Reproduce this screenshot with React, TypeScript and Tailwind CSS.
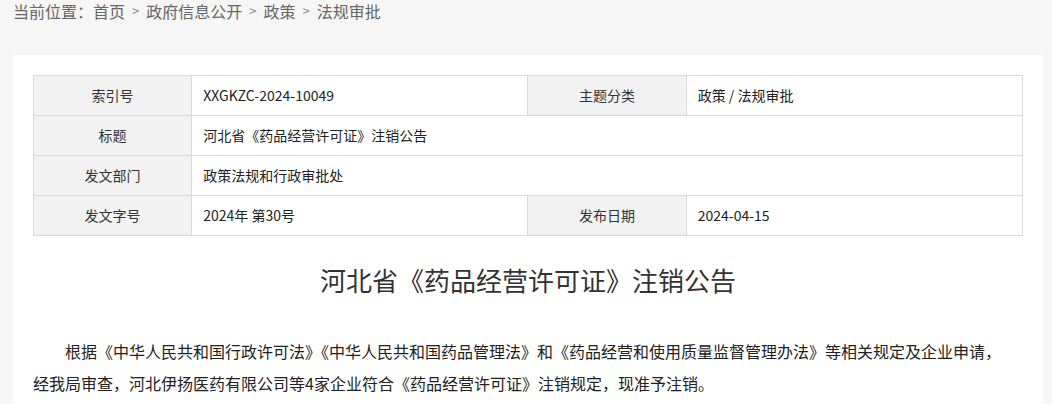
import React from 'react'

const font = { fontFamily: '"Microsoft YaHei", "Noto Sans CJK SC", sans-serif' }

const crumbs = ['首页', '政府信息公开', '政策', '法规审批']

function Label({ children }: { children: React.ReactNode }) {
  return <td className="h-10 border border-[#d9d9d9] bg-[#f2f2f2] text-center text-[14px] text-[#333]">{children}</td>
}

function Value({ children, colSpan }: { children?: React.ReactNode; colSpan?: number }) {
  return (
    <td colSpan={colSpan} className="h-10 border border-[#d9d9d9] bg-white px-[11px] text-left text-[14px] text-[#222]">
      {children}
    </td>
  )
}

export default function App() {
  return (
    <div className="min-h-screen bg-[#f6f6f6]" style={font}>
      <div className="flex items-center px-[13px] text-[16px] leading-[22px] text-[#666]">
        <span>当前位置：</span>
        {crumbs.map((c, i) => (
          <span key={c} className="flex items-center">
            {i > 0 && <span className="mx-[7px] text-[13px] text-[#888]">&gt;</span>}
            <span>{c}</span>
          </span>
        ))}
      </div>

      <div className="ml-[13px] mr-[9px] mt-[33px] bg-white px-5 pt-5 pb-10">
        <table className="w-full table-fixed border-collapse">
          <colgroup>
            <col className="w-[16%]" />
            <col className="w-[34%]" />
            <col className="w-[16%]" />
            <col className="w-[34%]" />
          </colgroup>
          <tbody>
            <tr>
              <Label>索引号</Label>
              <Value>XXGKZC-2024-10049</Value>
              <Label>主题分类</Label>
              <Value>政策 / 法规审批</Value>
            </tr>
            <tr>
              <Label>标题</Label>
              <Value colSpan={3}>河北省《药品经营许可证》注销公告</Value>
            </tr>
            <tr>
              <Label>发文部门</Label>
              <Value colSpan={3}>政策法规和行政审批处</Value>
            </tr>
            <tr>
              <Label>发文字号</Label>
              <Value>2024年 第30号</Value>
              <Label>发布日期</Label>
              <Value>2024-04-15</Value>
            </tr>
          </tbody>
        </table>

        <h1 className="mt-[24px] text-center text-[26px] leading-[40px] text-[#333]">河北省《药品经营许可证》注销公告</h1>

        <div className="mt-[35px] pr-5 text-[16px] leading-[32px] text-[#222]">
          <p className="indent-8">
            根据《中华人民共和国行政许可法》《中华人民共和国药品管理法》和《药品经营和使用质量监督管理办法》等相关规定及企业申请，经我局审查，河北伊扬医药有限公司等4家企业符合《药品经营许可证》注销规定，现准予注销。
          </p>
        </div>
      </div>
    </div>
  )
}
